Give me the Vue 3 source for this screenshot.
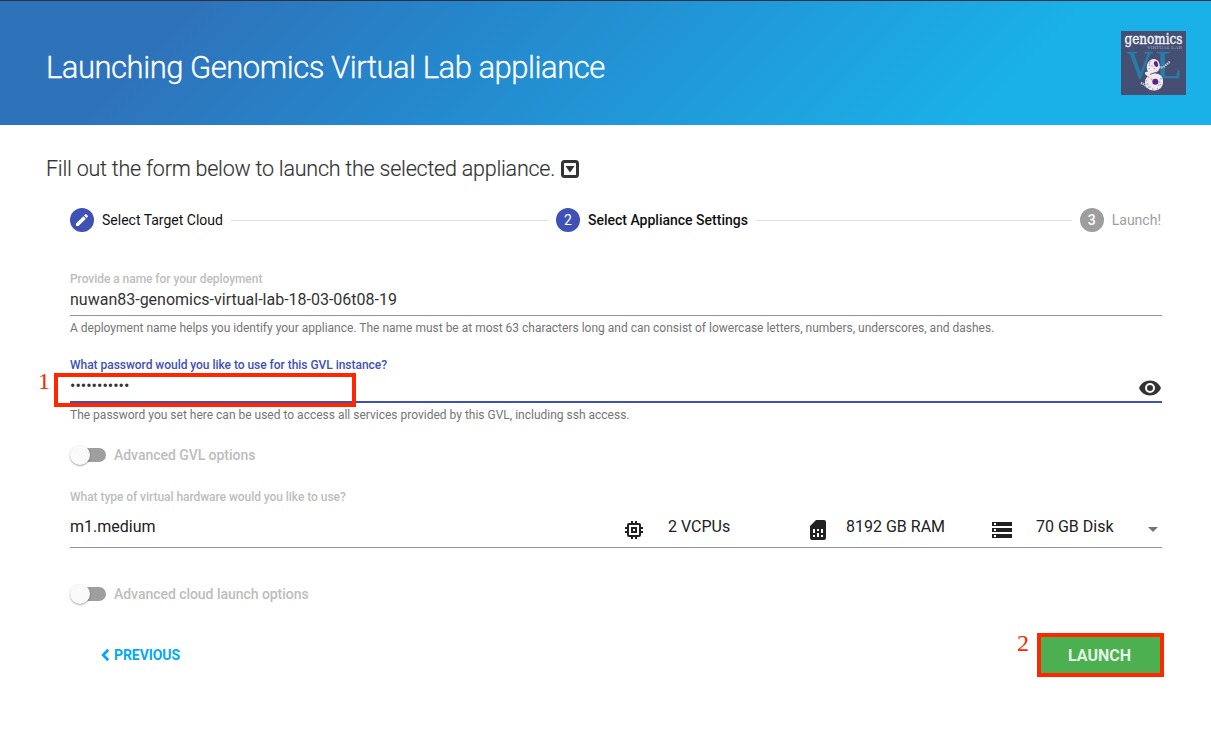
<script setup>
const passwordDots = '•'.repeat(11)
</script>

<template>
  <div class="page">
    <header class="banner">
      <h1>Launching Genomics Virtual Lab appliance</h1>
      <svg class="logo" viewBox="0 0 65 64" width="65" height="64">
        <rect width="65" height="64" fill="#444f73" />
        <text x="6" y="46.5" class="logo-vl" font-size="40" textLength="26" lengthAdjust="spacingAndGlyphs">V</text>
        <text x="35" y="46.5" class="logo-vl" font-size="40" textLength="26" lengthAdjust="spacingAndGlyphs">L</text>
        <text x="3.5" y="13" class="logo-name" font-size="14" textLength="58" lengthAdjust="spacingAndGlyphs">genomics</text>
        <text x="26" y="18" class="logo-sub" font-size="5" textLength="35" lengthAdjust="spacingAndGlyphs">VIRTUAL LAB</text>
        <path d="M38 36c5 2 8-4 11-5M29 56c-5 1-5-4-10-4" fill="none" stroke="#c3c6d4" stroke-width="2.2" stroke-dasharray="1.5 .7" />
        <path d="M27 41c-3-6 0-13 6-13 6 0 8 10 3 13-4 1-7 1-7 3 8-4 14 1 13 8-1 9-14 10-17 3-2-5-1-7 2-10-4-1-4-5 0-4z" fill="#f0e9ee" />
        <path d="M28 32l8 8M27 46l13 8M26 53l8 7" stroke="#e79c96" stroke-width="1.4" stroke-dasharray="1.5 2" />
        <path d="M29 30l-1 9M40 47l-4 12M25 49l4 10" stroke="#9cb6da" stroke-width="1.4" stroke-dasharray="1.5 2" />
        <ellipse cx="35" cy="33" rx="2" ry="3" fill="#5b238d" transform="rotate(-18 35 33)" />
        <circle cx="34.3" cy="50.8" r="3" fill="#5b238d" />
      </svg>
    </header>

    <main class="content">
      <h2>
        <span class="intro">Fill out the form below to launch the selected appliance.</span>
        <svg class="caret-box" viewBox="0 0 18 18" width="18" height="18">
          <rect x="1.5" y="1.5" width="15" height="15" rx="2" fill="none" stroke="#333" stroke-width="3" />
          <path d="M4.5 6h9L9 12.5z" fill="#333" />
        </svg>
      </h2>

      <div class="form">
        <nav class="steps">
          <div class="step">
            <span class="bubble">
              <svg viewBox="0 0 24 24" width="16" height="16"><path fill="#fff" d="M3 17.25V21h3.75L17.81 9.94l-3.75-3.75L3 17.25zM20.71 7.04a1 1 0 0 0 0-1.41l-2.34-2.34a1 1 0 0 0-1.41 0l-1.83 1.83 3.75 3.75 1.83-1.83z" /></svg>
            </span>
            <span class="step-one">Select Target Cloud</span>
          </div>
          <i class="rule first-rule"></i>
          <div class="step active">
            <span class="bubble">2</span>
            <span class="step-two">Select Appliance Settings</span>
          </div>
          <i class="rule"></i>
          <div class="step pending">
            <span class="bubble">3</span>
            <span class="step-three">Launch!</span>
          </div>
        </nav>

        <section class="field name-field">
          <label><span class="name-label">Provide a name for your deployment</span></label>
          <div class="value"><span class="name-value">nuwan83-genomics-virtual-lab-18-03-06t08-19</span></div>
          <p class="hint"><span class="name-hint">A deployment name helps you identify your appliance. The name must be at most 63 characters long and can consist of lowercase letters, numbers, underscores, and dashes.</span></p>
        </section>

        <section class="field password-field">
          <label><span class="password-label">What password would you like to use for this GVL instance?</span></label>
          <div class="value">
            <span class="dots">{{ passwordDots }}</span>
            <svg class="eye" viewBox="0 0 24 24" width="24" height="24"><path fill="#333" d="M12 4.5C7 4.5 2.73 7.61 1 12c1.73 4.39 6 7.5 11 7.5s9.27-3.11 11-7.5c-1.73-4.39-6-7.5-11-7.5zM12 17a5 5 0 1 1 0-10 5 5 0 0 1 0 10zm0-8a3 3 0 1 0 0 6 3 3 0 0 0 0-6z" /></svg>
          </div>
          <p class="hint"><span class="password-hint">The password you set here can be used to access all services provided by this GVL, including ssh access.</span></p>
          <div class="callout callout-password"><b>1</b></div>
        </section>

        <div class="toggle gvl-toggle">
          <span class="track"><i></i></span>
          <span class="gvl-label">Advanced GVL options</span>
        </div>

        <section class="field hardware-field">
          <label><span class="hardware-label">What type of virtual hardware would you like to use?</span></label>
          <div class="hardware">
            <span class="flavor">m1.medium</span>
            <svg viewBox="0 0 24 24" width="24" height="24"><path fill="#212121" d="M15 9H9v6h6V9zm-2 4h-2v-2h2v2zm8-2V9h-2V7a2 2 0 0 0-2-2h-2V3h-2v2h-2V3H9v2H7a2 2 0 0 0-2 2v2H3v2h2v2H3v2h2v2a2 2 0 0 0 2 2h2v2h2v-2h2v2h2v-2h2a2 2 0 0 0 2-2v-2h2v-2h-2v-2h2zm-4 6H7V7h10v10z" /></svg>
            <span class="cpu">2 VCPUs</span>
            <svg viewBox="0 0 24 24" width="24" height="24"><path fill="#212121" fill-rule="evenodd" d="M19.99 4A2 2 0 0 0 18 2h-8L4 8v12a2 2 0 0 0 2 2h12a2 2 0 0 0 2-2zM9 19H7v-2h2v2zm8 0h-2v-2h2v2zm-8-4H7v-4h2v4zm4 4h-2v-4h2v4zm0-6h-2v-2h2v2zm4 2h-2v-4h2v4z" /></svg>
            <span class="ram">8192 GB RAM</span>
            <svg viewBox="0 0 24 24" width="24" height="24"><path fill="#212121" fill-rule="evenodd" d="M2 20h20v-4H2v4zm2-3h2v2H4v-2zM2 4v4h20V4H2zm4 3H4V5h2v2zm-4 7h20v-4H2v4zm2-3h2v2H4v-2z" /></svg>
            <span class="disk">70 GB Disk</span>
            <svg class="select-arrow" viewBox="0 0 10 5" width="10" height="5"><path fill="#757575" d="M0 0h10L5 5z" /></svg>
          </div>
        </section>

        <div class="toggle cloud-toggle">
          <span class="track"><i></i></span>
          <span class="cloud-label">Advanced cloud launch options</span>
        </div>

        <footer class="actions">
          <a class="previous">
            <svg viewBox="0 0 9 14" width="9" height="14"><path d="M7.2 1.8L2.2 7l5 5.2" fill="none" stroke="#03a9f4" stroke-width="2.8" /></svg>
            <span class="previous-text">PREVIOUS</span>
          </a>
          <button class="launch"><span class="launch-text">LAUNCH</span><b>2</b></button>
        </footer>
      </div>
    </main>
  </div>
</template>

<style>
body { background: #fff; }
</style>

<style scoped>
* { box-sizing: border-box; }
.page {
  width: 1211px; height: 740px; overflow: hidden; background: #fff;
  font-family: Roboto, "Liberation Sans", sans-serif; color: #212121;
}
.page span { white-space: nowrap; }
.banner {
  height: 125px; border-top: 1px solid #2c3044; padding: 0 25px 0 46px;
  display: flex; justify-content: space-between; align-items: center;
  background: linear-gradient(135deg, #2e73ba 15%, #2587cc 38%, #1ab1e8 82%);
}
h1 { margin: 10px 0 0; font-size: 31px; font-weight: 300; line-height: 40px; letter-spacing: -.48px; color: #fff; -webkit-text-stroke: .3px #fff; }
.logo { display: block; overflow: visible; }
.logo-vl { font-family: "Liberation Serif", serif; fill: #297ca5; stroke: #297ca5; stroke-width: .5px; }
.logo-name { font-family: "DejaVu Serif", serif; font-weight: 400; fill: #f4f5f8; stroke: #f4f5f8; stroke-width: .4px; }
.logo-sub { font-family: "Liberation Serif", serif; fill: #9fa8ba; }
.content { padding: 28px 49px 0 46px; }
h2 { margin: 0; height: 32px; display: flex; align-items: center; gap: 6px; font-size: 21.5px; font-weight: 300; letter-spacing: -.23px; color: #333; }
.intro { margin-top: -2px; -webkit-text-stroke: .15px #333; }
.form { padding-left: 24px; }
.steps { margin-top: 23px; height: 24px; display: flex; align-items: center; gap: 8px; font-size: 14px; color: #111; }
.rule { flex: 1; height: 1px; background: #dedede; }
.first-rule { flex: 0 0 317px; }
.step { display: flex; align-items: center; gap: 8px; }
.step-three { margin-right: 1px; }
.bubble {
  width: 24px; height: 24px; border-radius: 50%; background: #3f51b5; color: #fff;
  display: flex; align-items: center; justify-content: center; font-weight: 400;
}
.active { font-weight: 500; }
.pending { color: #9e9e9e; }
.pending .bubble { background: #9e9e9e; font-weight: 500; }
.field { position: relative; }
.field label { display: block; height: 16px; line-height: 18px; font-size: 12px; font-weight: 500; color: #bdbdbd; letter-spacing: -.05px; }
.name-field { margin-top: 38px; height: 86px; }
.value { display: flex; font-size: 16px; }
.name-field .value { height: 30px; padding-top: 4px; line-height: 20px; border-bottom: 1px solid #949494; color: #333; }
.hint { margin: 4px 0 0; font-size: 12px; line-height: 16px; color: #757575; }
.password-field { height: 86px; }
.password-field label { color: #3f51b5; letter-spacing: -.035px; }
.password-field .value { height: 31px; border-bottom: 2px solid #3f51b5; justify-content: space-between; }
.dots { line-height: 28px; font-size: 16px; color: #333; }
.eye { margin-top: 4px; }
.callout { position: absolute; border: 4px solid #ff2600; }
.callout-password { left: -16px; top: 17px; width: 302px; height: 34px; }
.callout b, .launch b { position: absolute; font: 400 24px/24px "Liberation Serif", serif; color: #ff2600; }
.callout b { left: -20px; top: -8px; }
.toggle { display: flex; align-items: center; gap: 8px; height: 20px; font-size: 14px; font-weight: 500; color: #bdbdbd; letter-spacing: -.04px; }
.gvl-toggle { margin-top: 3px; }
.track { position: relative; width: 36px; height: 14px; border-radius: 7px; background: linear-gradient(90deg, transparent 8px, #9e9e9e 8px); }
.track i { position: absolute; left: 0; top: -3px; width: 20px; height: 20px; border-radius: 50%; background: #fafafa; box-shadow: 0 1px 2px rgba(0, 0, 0, .35); }
.hardware-field { margin-top: 23px; }
.hardware { height: 44px; border-bottom: 1px solid #949494; display: flex; align-items: center; font-size: 16px; line-height: 20px; }
.hardware span { flex: none; margin-top: 2px; }
.hardware svg { flex: none; margin-top: 9px; }
.flavor { width: 552px; }
.cpu { width: 160px; padding-left: 22px; }
.ram { width: 160px; padding-left: 16px; }
.disk { width: 116px; padding-left: 22px; }
.hardware .select-arrow { margin: 8px 4px 0 auto; }
.cloud-toggle { margin-top: 36px; }
.actions { margin-top: 29px; padding-left: 31px; display: flex; justify-content: space-between; align-items: flex-start; }
.previous { display: flex; align-items: center; gap: 4px; height: 44px; font-size: 14px; font-weight: 700; color: #03a9f4; letter-spacing: -.08px; }
.launch {
  position: relative; width: 127px; height: 44px; margin-right: -2px; padding: 2px 2px 0 0; border: 4px solid #ff2600;
  background: #4caf50; color: #e4f3e5; font: 700 16px/20px Roboto, sans-serif;
}
.launch b { left: -24px; top: -6px; }
</style>
